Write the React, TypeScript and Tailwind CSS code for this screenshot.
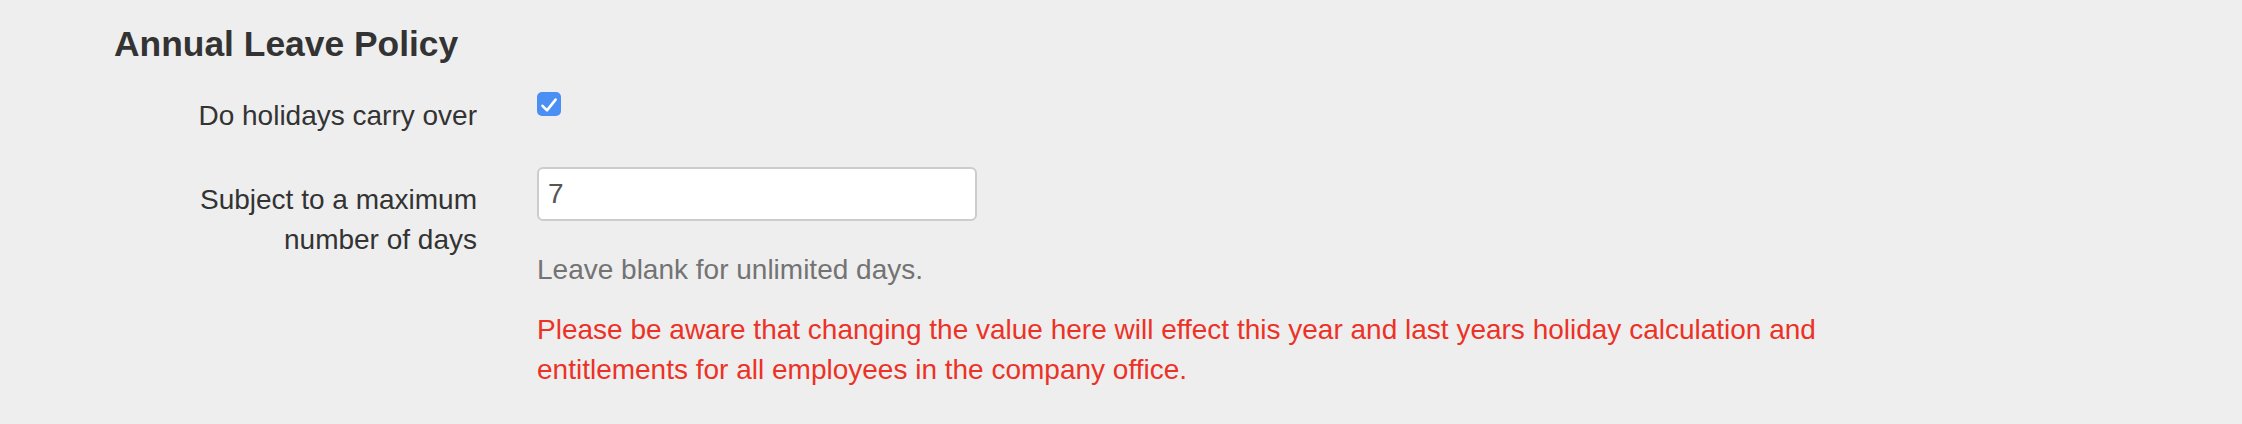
import React from "react";

export default function App() {
  return (
    <div className="min-h-[424px] w-full bg-[#eeeeee] pt-[24px] pl-[114px] font-['Liberation_Sans',Arial,sans-serif] text-[#333333]">
      <h3 className="text-[35.4px] leading-[40px] font-bold">Annual Leave Policy</h3>

      <div className="mt-[19px] flex gap-[60px]">
        <label className="w-[363px] shrink-0 pt-[13px] text-right text-[28px] leading-[40px]">
          Do holidays carry over
        </label>
        <div className="pt-[9px]">
          <span className="flex h-[24px] w-[24px] items-center justify-center rounded-[5px] bg-[#4a8ff4]">
            <svg width="24" height="24" viewBox="0 0 24 24" fill="none">
              <path d="M5.5 13.8 L10 18.4 L18.6 7.6" stroke="#ffffff" strokeWidth="2.6" strokeLinecap="round" strokeLinejoin="round" />
            </svg>
          </span>
        </div>
      </div>

      <div className="mt-[31px] flex gap-[60px]">
        <label className="w-[363px] shrink-0 pt-[13px] text-right text-[28px] leading-[40px]">
          Subject to a maximum number of days
        </label>
        <div className="w-[1340px]">
          <input
            type="text"
            defaultValue="7"
            className="block h-[54px] w-[440px] rounded-[6px] border-2 border-[#cccccc] bg-white pl-[9px] text-[28px] text-[#555555] outline-none"
          />
          <p className="mt-[29px] text-[28px] leading-[40px] text-[#737373]">Leave blank for unlimited days.</p>
          <p className="mt-[20px] text-[28px] leading-[40px] text-[#ec3226]">
            Please be aware that changing the value here will effect this year and last years holiday calculation and entitlements for all employees in the company office.
          </p>
        </div>
      </div>
    </div>
  );
}
